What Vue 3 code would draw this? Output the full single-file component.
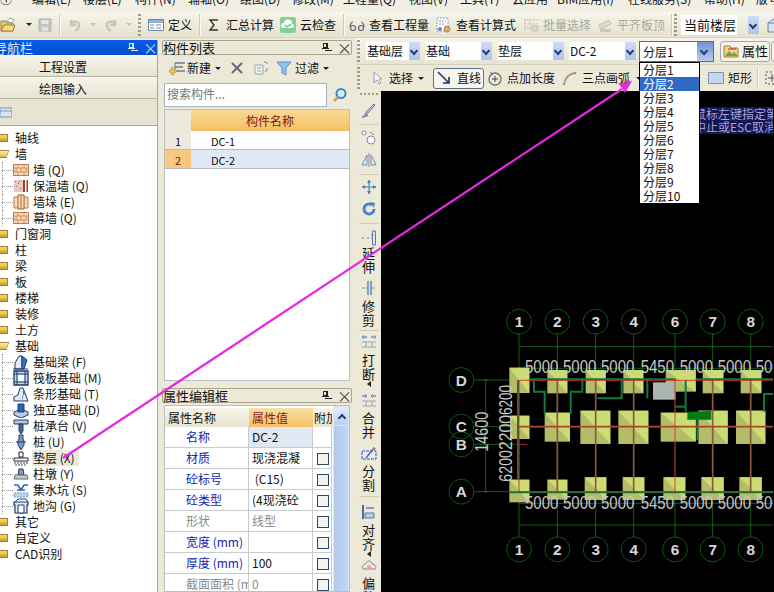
<script setup>
const icons = {
  folder: '<path d="M1 4h5l1 2h6v8H1z" fill="#e8c860" stroke="#a08030"/><path d="M7 4l3-3 4 2-2 3z" fill="#fff" stroke="#8aa"/><path d="M1 14l3-6h11l-2 6z" fill="#f2d98a" stroke="#a08030"/>',
  save: '<path d="M2 2h12v12H2z" fill="#c4c6c0" stroke="#b0b0aa"/><path d="M4.500 3h7v4h-7z" fill="#e6e6e0"/><path d="M5 10h6v4H5z" fill="#e0e0da"/>',
  undo: '<path d="M5 3v5h5M5 8c2-5 8-4 8 0 0 3-2 5-4 6" fill="none" stroke="#c4c6c0" stroke-width="2.500"/>',
  redo: '<path d="M12 3v5H7M12 8C10 3 4 4 4 8c0 3 2 5 4 6" fill="none" stroke="#c4c6c0" stroke-width="2.500"/>',
  table: '<path d="M.5 2.500h15v11H.5z" fill="#fff" stroke="#6a84a8"/><path d="M1 3h14v3H1z" fill="#8fb0da"/><path d="M2 8h4M2 11h4M8 8h5M8 11h5" stroke="#6a84a8"/>',
  sigma: '<path d="M12 3H4l4 5-4 5h8" fill="none" stroke="#333" stroke-width="1.400"/>',
  cloud: '<rect x="0" y="0" width="16" height="16" rx="2" fill="#7fd19a"/><path d="M3 11a2.500 2.500 0 0 1 1-5 4 4 0 0 1 8 1 2 2 0 0 1 0 4z" fill="#fff"/><path d="M5 8l2 2 4-3" fill="none" stroke="#5cb87a" stroke-width="1.300"/>',
  glasses: '<path d="M1 10c0-3 2-5 3-5M15 10c0-3-2-5-3-5" fill="none" stroke="#667" stroke-width="1.200"/><circle cx="4" cy="11" r="2.500" fill="none" stroke="#667" stroke-width="1.200"/><circle cx="12" cy="11" r="2.500" fill="none" stroke="#667" stroke-width="1.200"/>',
  calc: '<path d="M1 1h11v13H1z" fill="#fff" stroke="#8aa0c0" stroke-dasharray="2 1"/><path d="M3 4h7M3 7h5" stroke="#6a8ac0" stroke-dasharray="2 1"/><circle cx="11" cy="12" r="3" fill="#e8a860" stroke="#a86"/><circle cx="4" cy="12" r="2" fill="#6a8ac0"/>',
  batch: '<path d="M1 3h14M1 7h14M1 11h10M2 2v12M7 2v12" stroke="#c4c6be" stroke-dasharray="2 1" fill="none"/><path d="M9 9h6v5H9z" fill="#d8d8d0" stroke="#c0c0b8"/>',
  level: '<path d="M2 8l10-5 2 4-10 5z" fill="#dcdcd4" stroke="#bcbcb4"/><path d="M3 12h11v3H3z" fill="#c8c8c0"/>',
  house: '<path d="M1 6l7-5 7 5v9H1z" fill="#d8e4f2" stroke="#6a84a8"/><path d="M1 6h14" stroke="#6a84a8"/>',
  attr: '<path d="M1 3h6l1 2h7v9H1z" fill="#eed28a" stroke="#a08030"/><path d="M2 13l4-5 3 3 2-2 4 4z" fill="#6aa84f"/><path d="M5 6h8" stroke="#c03030"/>',
  pointer: '<path d="M5 2v11l3-3 2 4 2-1-2-4h3z" fill="#f4f4f8" stroke="#9aa4bc"/>',
  line: '<path d="M2 2l11 11M13 7v6H7" fill="none" stroke="#1a3a6a" stroke-width="1.600"/>',
  ptlen: '<circle cx="8" cy="9" r="6" fill="none" stroke="#777" stroke-width="1.400"/><path d="M8 6v6M5 9h6" stroke="#445"/><path d="M3 2l3 2-3 2" fill="none" stroke="#777"/>',
  arc: '<path d="M2 14C3 8 7 4 13 3" fill="none" stroke="#b89a90" stroke-width="1.800"/><circle cx="2" cy="14" r="1.300" fill="#8a8"/><circle cx="13" cy="3" r="1.300" fill="#a88"/>',
  rect: '<path d="M.5 2.500h15v11H.5z" fill="#c4d6f2" stroke="#7a94bc"/>',
  snap: '<path d="M2 2h12v12H2z" fill="none" stroke="#555" stroke-dasharray="2 2"/><path d="M8 4v8M4 8h8" stroke="#556"/>',
  newb: '<path d="M6 3h10M6 7h8M6 11h10" stroke="#6a7a94" stroke-width="1.300"/><path d="M6 3v8" stroke="#6a7a94"/><path d="M3 9h3v3h3v3H6v3H3v-3H0v-3h3z" transform="scale(.82)" fill="#e8c860" stroke="#a89040" stroke-width=".7"/>',
  del: '<path d="M3 3l10 10M13 3L3 13" stroke="#646a74" stroke-width="2"/>',
  copy: '<path d="M2 5h8v9H2z" fill="#f0f0ea" stroke="#9ab"/><path d="M4 8h4M4 11h4" stroke="#9ab"/><path d="M11 2h3v3M14 8v3h-3" fill="none" stroke="#68a" stroke-dasharray="2 1"/>',
  filter: '<path d="M1 2h14L10 8v7L6 13V8z" fill="#8ac4ec" stroke="#5a94c8"/>',
  search: '<circle cx="9" cy="6.500" r="4.500" fill="#d8ecf8" stroke="#3a8ad0" stroke-width="2"/><path d="M6 10l-4 4" stroke="#d8a040" stroke-width="2.500"/>',
  pen: '<path d="M3 14l3-5 7-7 1 1-6 7z" fill="#c4c6dc" stroke="#778"/><path d="M1 15c3 0 4-1 6-2" stroke="#a060c0" fill="none" stroke-width="1.500"/>',
  nodes: '<circle cx="3" cy="4" r="2" fill="#fff" stroke="#88a"/><circle cx="10" cy="11" r="4" fill="#fff" stroke="#88a"/><path d="M9 3l4 3" stroke="#88a"/>',
  mirror: '<path d="M8 1v14" stroke="#88a"/><path d="M6 3v10H1zM10 3v10h5z" fill="#dfe6f4" stroke="#7a8cb4"/>',
  move: '<path d="M8 1v14M1 8h14" stroke="#6a9ac0" stroke-width="1.500"/><path d="M8 1l-2 3h4zM8 15l-2-3h4zM1 8l3-2v4zM15 8l-3-2v4z" fill="#4a7ab0"/>',
  rotate: '<path d="M13 8a5 5 0 1 1-2-4" fill="none" stroke="#4a84d0" stroke-width="3"/><path d="M9 1l5 1-1 5z" fill="#4a84d0"/>',
  extend: '<path d="M1 8h3M6 8h2M10 5h3M10 8h1" stroke="#678" stroke-dasharray="2 1"/><path d="M11.500 1h3v14h-3z" fill="#e0e8f4" stroke="#5a7ab0"/>',
  trim: '<path d="M7 1v14M10 1v14" stroke="#5a7ab0" stroke-width="1.400"/><path d="M1 8h5M11 8h4" stroke="#5a9a9a" stroke-dasharray="3 1"/>',
  breakk: '<path d="M1 3h5M10 3h5" stroke="#6a9ac0" stroke-width="1.500"/><path d="M3 1L1 3l2 2M13 1l2 2-2 2" fill="none" stroke="#6a9ac0"/><path d="M1 8h14M1 13h14M5 8v5M11 8v5" stroke="#9aa4b4"/>',
  merge: '<path d="M1 3h5M10 3h5" stroke="#6a9ac0" stroke-width="1.500"/><path d="M4 1l2 2-2 2M12 1l-2 2 2 2" fill="none" stroke="#6a9ac0"/><path d="M1 8h14M1 13h14M5 8v5M11 8v5" stroke="#9aa4b4"/>',
  split: '<path d="M1 5h14v8H1z" fill="#e4ecf8" stroke="#3a4ac0" stroke-dasharray="3 1"/><path d="M5 12l8-10" stroke="#668" stroke-width="1.500"/><path d="M12 1l3 1-2 3z" fill="#a88"/>',
  align: '<path d="M2 1v14" stroke="#4a6a9a" stroke-width="2"/><path d="M5 4h8" stroke="#5a7ab0" stroke-width="1.400" fill="none"/><path d="M4 9h9v5H4z" fill="#b8cce8" stroke="#5a7ab0"/>',
  offset: '<path d="M2 12c-2-3 1-5 3-5 0-4 6-4 6 0 3 0 5 3 3 5z" fill="#f4e6e6" stroke="#8a8a8a"/><circle cx="8" cy="10" r="2" fill="#e8a0b0"/>',
  brick: '<path d="M.5 2.500h15v11H.5z" fill="#f8d8b8" stroke="#c07850"/><path d="M1 6h14M1 10h14M5 3v3M11 3v3M8 6v4M3 6v4M13 6v4M5 10v3M11 10v3" stroke="#d09060"/>',
  insul: '<path d="M1 2h9v12H1z" fill="#e8c8c0"/><path d="M2 3h1v1H2zM5 5h1v1H5zM3 8h1v1H3zM7 10h1v1H7zM6 3h1v1H6z" fill="#966"/><path d="M10 2h2v12h-2zM13.500 2h1.500v12h-1.500z" fill="#a04020"/>',
  pier: '<path d="M1 3h14v11H1z" fill="#f8d8b8" stroke="#c07850"/><path d="M5 1h6v14H5z" fill="#ffe8c0" stroke="#a05820"/><path d="M8 1v14" stroke="#a05820"/>',
  fbeam: '<path d="M2 15V9l4-7h3v13z" fill="#dfe8f4" stroke="#1f3a6a"/><path d="M9 2l5 4-3 9H9z" fill="#2a78d0" stroke="#1f3a6a"/><path d="M0 15h15" stroke="#1f3a6a"/>',
  raft: '<path d="M1 1h14v14H1z" fill="#c8d8ec" stroke="#1f3a6a" stroke-width="1.300"/><path d="M4 1v14M12 1v14M1 4h14M1 12h14" stroke="#1f3a6a"/><path d="M5 5h6v6H5z" fill="#fff"/>',
  strip: '<path d="M1 15v-4l4-2 2-7h3l5 13z" fill="#e4ecf6" stroke="#1f3a6a"/><path d="M10 2l2 6-3 2 1 5z" fill="#2a78d0"/>',
  indep: '<path d="M1 10l7-3 7 3v3l-7 3-7-3z" fill="#b8cce8" stroke="#1f3a6a"/><path d="M5 2h6v8H5z" fill="#2a68b0" stroke="#1f3a6a"/>',
  cap: '<path d="M1 2h14v4H1z" fill="#b8c8dc" stroke="#1f3a6a"/><path d="M6 6h4v7l-2 3-2-3z" fill="#446a9a" stroke="#1f3a6a"/>',
  pile: '<path d="M6 1h4v4l1 2v4l-3 5-3-5V7l1-2z" fill="#7a9ac4" stroke="#1f3a6a"/><path d="M3 8h10" stroke="#1f3a6a"/>',
  cushion: '<path d="M6 2h4v5H6zM1 8h14v3H1z" fill="#fff" stroke="#223"/><path d="M1 13h14M2 15h12" stroke="#445" stroke-dasharray="2 1"/>',
  cpier: '<path d="M6 3h4l1 6H5z" fill="#7a9ac4" stroke="#334"/><path d="M2 9h12l1 4H1z" fill="#c8c8c8" stroke="#667"/>',
  sump: '<path d="M1 3h4l3 5 3-5h4M4 8h8" fill="none" stroke="#2a6ab0" stroke-width="1.500"/><path d="M1 11h14v4H1z" fill="#b8d8f0" stroke="#6a9ac0" stroke-dasharray="2 1"/>',
  trench: '<path d="M1 4h14v3h-1v8H2V7H1z" fill="#dfe8f4" stroke="#1f3a6a" stroke-width="1.200"/><path d="M5 7h6v8H5z" fill="#fff" stroke="#1f3a6a"/><path d="M2 4l3-3h8l2 3" fill="none" stroke="#1f3a6a"/>',
  leaf: '<path d="M0 4h12v9H0z" fill="#d8e4f4" stroke="#7a94bc"/><path d="M0 7h12" stroke="#7a94bc"/>'
}

const withW = arr => arr.map((it, i) => ({ ...it, w: (arr[i + 1] ? arr[i + 1].x : it.end) - it.x }))
const row1 = withW([
  { x: 0, ic: 'folder' }, { x: 22, caret: 1 }, { x: 37, ic: 'save' }, { x: 58, sep: 1 },
  { x: 66, ic: 'undo' }, { x: 86, caret: 1, off: 1 }, { x: 103, ic: 'redo' }, { x: 122, caret: 1, off: 1 },
  { x: 136, grip: 1 }, { x: 148, ic: 'table', t: '定义' }, { x: 198, sep: 1 },
  { x: 206, ic: 'sigma', t: '汇总计算' }, { x: 280, ic: 'cloud', t: '云检查' }, { x: 342, sep: 1 },
  { x: 349, ic: 'glasses', t: '查看工程量' }, { x: 436, ic: 'calc', t: '查看计算式' },
  { x: 523, ic: 'batch', t: '批量选择', off: 1 }, { x: 597, ic: 'level', t: '平齐板顶', off: 1 },
  { x: 670, sep: 1, end: 674 }
])
const row3 = withW([
  { x: 369, ic: 'pointer', t: '选择' }, { x: 414, caret: 1 }, { x: 433, ic: 'line', t: '直线', box: 1 },
  { x: 487, ic: 'ptlen', t: '点加长度' }, { x: 562, ic: 'arc', t: '三点画弧' }, { x: 632, caret: 1 },
  { x: 708, ic: 'rect', t: '矩形' }, { x: 756, sep: 1 }, { x: 764, ic: 'snap', end: 782 }
])
const combos = [
  { t: '基础层', w: 43 }, { t: '基础', w: 56 }, { t: '垫层', w: 56 }, { t: 'DC-2', w: 56 }
]
const menus = [
  ['①', 32], ['编辑(E)', 51], ['楼层(L)', 52], ['构件(N)', 53], ['辅轴(O)', 52], ['绘图(D)', 52], ['修改(M)', 51],
  ['工程量(Q)', 66], ['视图(V)', 51], ['工具(T)', 52], ['云应用', 45], ['BIM应用(I)', 71], ['在线服务(S)', 76], ['帮助(H)', 52], ['版号', 40]
]
const tree = [
  { t: '轴线' }, { t: '墙', open: 1 },
  { t: '墙 (Q)', ic: 'brick' }, { t: '保温墙 (Q)', ic: 'insul' }, { t: '墙垛 (E)', ic: 'pier' }, { t: '幕墙 (Q)', ic: 'brick' },
  { t: '门窗洞' }, { t: '柱' }, { t: '梁' }, { t: '板' }, { t: '楼梯' }, { t: '装修' }, { t: '土方' }, { t: '基础', open: 1 },
  { t: '基础梁 (F)', ic: 'fbeam' }, { t: '筏板基础 (M)', ic: 'raft' }, { t: '条形基础 (T)', ic: 'strip' }, { t: '独立基础 (D)', ic: 'indep' },
  { t: '桩承台 (V)', ic: 'cap' }, { t: '桩 (U)', ic: 'pile' }, { t: '垫层 (X)', ic: 'cushion', sel: 1 }, { t: '柱墩 (Y)', ic: 'cpier' },
  { t: '集水坑 (S)', ic: 'sump' }, { t: '地沟 (G)', ic: 'trench' },
  { t: '其它' }, { t: '自定义' }, { t: 'CAD识别' }
]
const props = [
  { n: '名称', v: 'DC-2', c: 'blue', vsel: 1, nochk: 1 },
  { n: '材质', v: '现浇混凝', c: 'blue' },
  { n: '砼标号', v: ' (C15)', c: 'blue' },
  { n: '砼类型', v: '(4现浇砼', c: 'blue' },
  { n: '形状', v: '线型', c: 'grey' },
  { n: '宽度 (mm)', v: '', c: 'blue' },
  { n: '厚度 (mm)', v: '100', c: 'blue' },
  { n: '截面面积 (m', v: '0', c: 'grey' }
]
const layers = Array.from({ length: 10 }, (_, i) => '分层' + (i + 1))
const vtools = [
  { grip: 1 }, { ic: 'pen' }, { sep: 1 }, { ic: 'nodes', mb: 1 }, { ic: 'mirror' }, { sep: 1 }, { ic: 'move' }, { ic: 'rotate' }, { sep: 1 },
  { ic: 'extend', t: '延伸', mt: 2, tm: -3, mb: 3 }, { ic: 'trim', t: '修剪', tm: 0, mb: 0 }, { sep: 1 },
  { ic: 'breakk', t: '打断', mt: -1, tm: 0, arrow: 1, mb: 3 }, { ic: 'merge', t: '合并', tm: -1, mb: 4 }, { ic: 'split', t: '分割', tm: -1, mb: 1 }, { sep: 1 },
  { ic: 'align', t: '对齐', mt: 3, tm: 0, arrow: 1 }, { ic: 'offset', t: '偏移', mt: -3, tm: 0 }
]

// CAD plan, in 3x units of the drawing
const axesX = [[240, '1'], [355, '2'], [470, '3'], [584, '4'], [708, '6'], [821, '7'], [935, '8']]
const axesY = [[240, 'D'], [380, 'C'], [433, 'B'], [575, 'A']]
const pads = [
  [211, 203, 60, 76], [325, 210, 60, 70], [440, 210, 60, 70], [553, 210, 60, 70], [680, 210, 90, 65], [791, 210, 62, 70], [905, 210, 62, 70],
  [213, 347, 58, 70], [317, 338, 76, 87], [424, 332, 90, 100], [538, 332, 90, 100], [665, 338, 105, 87], [778, 332, 88, 100], [891, 332, 88, 100],
  [211, 539, 60, 68], [325, 539, 60, 60], [437, 532, 65, 68], [551, 532, 65, 68], [673, 532, 66, 68], [787, 532, 67, 68], [901, 532, 67, 68]
]
const dims = [[258, '5000'], [372, '5000'], [486, '5000'], [605, '5450'], [722, '5000'], [836, '5000'], [950, '5000']]
const beams = [
  'M275 240H285V275H317V342', 'M430 240V275H395V342', 'M548 240V295H475', 'M625 240V295', 'M640 238H710',
  'M740 240V335', 'M708 320H740', 'M775 360V420', 'M975 335V282H1010', 'M237 240V540', 'M270 238H640', 'M770 238H1010', 'M210 577H1010'
]
</script>

<template>
  <div class="app">
    <div class="menu">
      <span v-for="m in menus" :key="m[0]" class="menu-item" :style="{ width: m[1] + 'px' }">{{ m[0] }}</span>
    </div>

    <div class="bar bar-main">
      <template v-for="(it, i) in row1" :key="i">
        <div class="ti" :class="{ off: it.off }" :style="{ width: it.w + 'px' }">
          <span v-if="it.sep" class="sep"></span>
          <span v-else-if="it.grip" class="grip"></span>
          <span v-else-if="it.caret" class="caret"></span>
          <template v-else>
            <svg class="ic" viewBox="0 0 16 16" v-html="icons[it.ic]"></svg>
            <span v-if="it.t">{{ it.t }}</span>
          </template>
        </div>
      </template>
      <span class="grip grip-floor"></span>
      <div class="combo floor"><span class="combo-text">当前楼层</span><span class="combo-btn"></span></div>
      <svg class="ic house" viewBox="0 0 16 16" v-html="icons.house"></svg>
    </div>

    <div class="body">
      <aside class="nav">
        <div class="nav-head">
          <span class="nav-title">导航栏</span>
          <span class="pin light"></span>
          <span class="close light">×</span>
        </div>
        <div class="nav-btn">工程设置</div>
        <div class="nav-btn">绘图输入</div>
        <div class="nav-tool"><svg class="leaf" viewBox="0 0 12 16" v-html="icons.leaf"></svg></div>
        <div class="tree">
          <div v-for="n in tree" :key="n.t" class="node" :class="{ child: n.ic }">
            <template v-if="n.ic">
              <svg class="ic" viewBox="0 0 16 16" v-html="icons[n.ic]"></svg>
              <span class="label" :class="{ selected: n.sel }">{{ n.t }}</span>
            </template>
            <template v-else>
              <span class="fold" :class="{ open: n.open }"></span>
              <span class="label">{{ n.t }}</span>
            </template>
          </div>
        </div>
      </aside>

      <section class="mid">
        <div class="pane-head">
          <span>构件列表</span><span class="spring"></span><span class="pin"></span><span class="close">×</span>
        </div>
        <div class="list-tools">
          <svg class="ic" viewBox="0 0 16 16" v-html="icons.newb"></svg><span class="ml1">新建</span><span class="caret"></span>
          <svg class="ic gap-l" viewBox="0 0 16 16" v-html="icons.del"></svg>
          <svg class="ic gap-l" viewBox="0 0 16 16" v-html="icons.copy"></svg>
          <svg class="ic gap-s" viewBox="0 0 16 16" v-html="icons.filter"></svg><span class="ml1">过滤</span><span class="caret"></span>
        </div>
        <div class="search">
          <div class="search-box">搜索构件...</div>
          <svg class="ic search-ic" viewBox="0 0 16 16" v-html="icons.search"></svg>
        </div>
        <div class="list">
          <div class="lrow lhead"><span class="lnum"></span><span class="lname">构件名称</span></div>
          <div class="lrow"><span class="lnum">1</span><span class="lcell">DC-1</span></div>
          <div class="lrow lsel"><span class="lnum">2</span><span class="lcell">DC-2</span></div>
        </div>
        <div class="pane-head attr-head">
          <span>属性编辑框</span><span class="spring"></span><span class="pin"></span><span class="close">×</span>
        </div>
        <div class="grid">
          <div class="grid-main">
            <div class="prow phead">
              <span class="pn">属性名称</span><span class="pv">属性值</span><span class="pa">附加</span>
            </div>
            <div v-for="p in props" :key="p.n" class="prow">
              <span class="pn cell" :class="p.c">{{ p.n }}</span>
              <span class="pv cell" :class="[{ vsel: p.vsel }, p.c === 'grey' ? 'grey' : '']">{{ p.v }}</span>
              <span class="pa cell"><i v-if="!p.nochk" class="chk"></i></span>
            </div>
          </div>
          <div class="scroll"><span class="scroll-up"></span><span class="scroll-grip"></span></div>
        </div>
      </section>

      <section class="work">
        <div class="bar bar-2">
          <span class="grip"></span>
          <div v-for="c in combos" :key="c.t" class="sel">
            <span class="sel-text" :style="{ width: c.w + 'px' }">{{ c.t }}</span><span class="combo-btn"></span>
          </div>
          <div class="combo active"><span class="combo-text">分层1</span><span class="combo-btn strong"></span></div>
          <button class="attr-btn"><svg class="ic" viewBox="0 0 16 16" v-html="icons.attr"></svg>属性</button>
          <span class="attr-next"></span>
        </div>
        <div class="bar bar-3">
          <span class="grip"></span>
          <div class="ti3" v-for="(it, i) in row3" :key="i" :style="{ width: it.w + 'px' }">
            <span v-if="it.sep" class="sep"></span>
            <span v-else-if="it.caret" class="caret"></span>
            <span v-else class="ti3-in" :class="{ boxed: it.box }">
              <svg class="ic" viewBox="0 0 16 16" v-html="icons[it.ic]"></svg>
              <span v-if="it.t">{{ it.t }}</span>
            </span>
          </div>
        </div>
        <div class="stage">
          <div class="vbar">
            <template v-for="(v, i) in vtools" :key="i">
              <span v-if="v.grip" class="vgrip"></span>
              <span v-else-if="v.sep" class="vsep"></span>
              <div v-else class="vitem" :style="{ marginTop: (v.mt || 0) + 'px', marginBottom: (v.mb || 0) + 'px' }">
                <svg class="ic" viewBox="0 0 16 16" v-html="icons[v.ic]"></svg>
                <span v-if="v.t" class="vtext" :style="{ marginTop: v.tm + 'px' }">{{ v.t }}</span>
                <span v-if="v.arrow" class="varrow"></span>
              </div>
            </template>
          </div>
          <div class="canvas">
            <svg class="plan" viewBox="-174 -627 1176 1503" width="392" height="501">
              <g stroke="#1c8a1c" stroke-width="2" fill="none">
                <path v-for="a in axesX" :key="'v' + a[1]" :d="`M${a[0]} 100V710`" />
                <path v-for="a in axesY" :key="'h' + a[1]" :d="`M105 ${a[0]}H240`" />
                <path d="M240 140H1010M240 675H1010M240 205H1010M240 610H1010M140 240V575" />
                <path d="M132 240h16M132 380h16M132 433h16M132 575h16" />
              </g>
              <g v-for="(p, i) in pads" :key="'p' + i">
                <rect :x="p[0]" :y="p[1]" :width="p[2]" :height="p[3]" fill="#b4bc68" />
                <path :d="`M${p[0]} ${p[1]}h${p[2]}v${p[3]}z`" fill="#ccdc70" />
              </g>
              <g fill="none" stroke="#0f7a3e" stroke-width="6">
                <path v-for="(b, i) in beams" :key="'b' + i" :d="b" />
              </g>
              <rect x="642" y="247" width="68" height="52" fill="#a9b6b0" />
              <path d="M745 336l72-4v27h-72z" fill="#047a16" />
              <g stroke="#8a5a3c" stroke-width="5" fill="none">
                <path d="M355 240V575M470 240V575M584 240V575M821 240V575M935 240V575M240 380H1010" />
              </g>
              <g stroke="#d82020" stroke-width="2.500" fill="none">
                <path d="M1010 241H240V575H1010M708 240V575M240 433H265" />
              </g>
              <path d="M240 380H1010" stroke="#c83020" stroke-width="1.500" />
              <g v-for="a in axesX" :key="'c' + a[1]">
                <circle :cx="a[0]" cy="65" r="37" class="bubble" />
                <text :x="a[0]" y="82" class="bub-t" text-anchor="middle">{{ a[1] }}</text>
                <circle :cx="a[0]" cy="748" r="37" class="bubble" />
                <text :x="a[0]" y="765" class="bub-t" text-anchor="middle">{{ a[1] }}</text>
              </g>
              <g v-for="a in axesY" :key="'l' + a[1]">
                <circle cx="67" :cy="a[0]" r="37" class="bubble" />
                <text x="67" :y="a[0] + 17" class="bub-t" text-anchor="middle">{{ a[1] }}</text>
              </g>
              <g v-for="d in dims" :key="d[0]">
                <text :x="d[0]" y="219" class="dim" textLength="100" lengthAdjust="spacingAndGlyphs">{{ d[1] }}</text>
                <text :x="d[0]" y="628" class="dim" textLength="100" lengthAdjust="spacingAndGlyphs">{{ d[1] }}</text>
              </g>
              <text transform="translate(148 455) rotate(-90)" class="dim" textLength="120" lengthAdjust="spacingAndGlyphs">14600</text>
              <text transform="translate(218 345) rotate(-90)" class="dim" textLength="90" lengthAdjust="spacingAndGlyphs">6200</text>
              <text transform="translate(218 450) rotate(-90)" class="dim" textLength="105" lengthAdjust="spacingAndGlyphs">2200</text>
              <text transform="translate(218 545) rotate(-90)" class="dim" textLength="95" lengthAdjust="spacingAndGlyphs">6200</text>
            </svg>
            <div class="hint">鼠标左键指定第一个端点<br />中止或ESC取消</div>
          </div>
        </div>
      </section>
    </div>

    <div class="drop">
      <div v-for="(l, i) in layers" :key="l" class="drop-item" :class="{ on: i === 1 }">{{ l }}</div>
    </div>

    <svg class="arrow" viewBox="0 0 774 592" width="774" height="592">
      <path d="M63 458L622 89" stroke="#e22ae2" stroke-width="2.200" fill="none" />
      <path d="M632 81L619 84L625 93z" fill="#e22ae2" />
    </svg>
  </div>
</template>

<style scoped>
.app {
  position: relative;
  width: 774px;
  height: 592px;
  overflow: hidden;
  display: flex;
  flex-direction: column;
  background: #ece9d8;
  color: #111;
  font: 12px/16px "Noto Sans CJK SC", "Liberation Sans", sans-serif;
}
.ic { width: 16px; height: 16px; flex: none; display: block; }
.menu {
  height: 12px;
  flex: none;
  overflow: hidden;
  display: flex;
  background: #f2efe4;
  white-space: nowrap;
}
.menu-item { flex: none; margin-top: -9px; line-height: 16px; }
.bar { display: flex; align-items: center; flex: none; }
.bar-main {
  height: 26px;
  background: linear-gradient(#f6f4ea, #e6e2ce);
  border-bottom: 1px solid #d6d2bc;
  box-sizing: border-box;
  white-space: nowrap;
}
.ti { flex: none; display: flex; align-items: center; gap: 4px; height: 24px; }
.off { color: #a8a89c; }
.sep { display: block; width: 1px; height: 22px; background: #cfcbb6; border-right: 1px solid #faf8f0; margin-left: 1px; }
.grip {
  display: block; width: 3px; height: 22px; flex: none; margin-left: 2px;
  background: repeating-linear-gradient(#9e9a86 0 2px, transparent 2px 4px);
}
.caret {
  display: block; width: 0; height: 0; flex: none; margin-left: 4px;
  border: 3px solid transparent; border-top: 3px solid #222; border-bottom: 0;
}
.off .caret { border-top-color: #c4c6c0; }
.grip-floor { margin-left: 0; }
.floor { margin-left: 4px; width: 78px; height: 20px; }
.combo { display: flex; align-items: center; flex: none; }
.combo-text { flex: 1; background: #fff; height: 100%; line-height: 20px; padding-left: 3px; }
.floor .combo-text { margin-right: 11px; font-size: 13px; }
.combo-btn {
  position: relative; flex: none; width: 11px; height: 18px;
  background: linear-gradient(#cddcf4, #aec4ea);
}
.combo-btn::after {
  content: ""; position: absolute; left: 2px; top: 6px; width: 4px; height: 4px;
  border: solid #24407a; border-width: 0 2px 2px 0; transform: rotate(45deg);
}
.house { margin-left: 8px; }
.body { flex: 1; display: flex; min-height: 0; }

.nav { width: 158px; flex: none; display: flex; flex-direction: column; border-right: 1px solid #a8a898; box-sizing: border-box; margin-top: 2px; }
.nav-head {
  height: 15px; flex: none; display: flex; align-items: center; position: relative;
  background: linear-gradient(#0a5ce8, #0550d0); color: #dfe9ff; font-size: 13px; line-height: 15px;
}
.nav-title { margin-left: -6px; flex: 1; }
.pin { display: block; width: 7px; height: 11px; flex: none; position: relative; }
.pin::before { content: ""; position: absolute; left: 1px; top: 1px; width: 5px; height: 5px; border: 1px solid #222; box-sizing: border-box; border-right-width: 2px; }
.pin::after { content: ""; position: absolute; left: 0; top: 6px; width: 7px; height: 1px; background: #222; box-shadow: 3px 2px 0 -0px #222; }
.pin.light::before { border-color: #dfe9ff; }
.pin.light::after { background: #dfe9ff; box-shadow: 3px 2px 0 #dfe9ff; }
.close { width: 12px; margin: 0 2px 0 8px; font-size: 15px; color: #444; line-height: 13px; text-align: center; flex: none; }
.close.light { color: #c0d4f8; }
.nav-btn {
  height: 22px; flex: none; box-sizing: border-box; line-height: 21px; text-align: center; margin-left: -31px;
  background: linear-gradient(#f6f4ea, #e8e4d0); border-top: 1px solid #fbfaf4; border-bottom: 1px solid #b8b49e;
}
.nav-tool { height: 27px; flex: none; background: #e8e4d2; display: flex; align-items: center; border-bottom: 1px solid #a8a898; box-sizing: border-box; }
.leaf { width: 12px; height: 16px; }
.tree { flex: 1; background: #fff; padding-top: 4px; overflow: hidden; }
.node { position: relative; height: 16px; display: flex; align-items: center; }
.fold {
  width: 9px; height: 8px; flex: none; margin-left: -1px; margin-right: 6px; box-sizing: border-box;
  background: linear-gradient(#f8dc80, #d8a020); border: 1px solid #a88020; border-left: 0; border-radius: 0 1px 1px 0;
}
.fold.open { background: linear-gradient(#fbeeb0, #e0b848); transform: skewX(-18deg); }
.node.child { padding-left: 13px; gap: 3px; }
.node.child::before { content: ""; position: absolute; left: 2px; width: 11px; top: 8px; border-top: 1px dotted #999; }
.node.child::after { content: ""; position: absolute; left: 2px; top: 0; height: 16px; border-left: 1px dotted #999; }
.label { line-height: 16px; padding: 0 1px; white-space: nowrap; }
.selected { background: #ece9d8; padding-right: 4px; }

.mid { width: 195px; flex: none; padding: 2px 0 0 4px; box-sizing: border-box; display: flex; flex-direction: column; }
.pane-head {
  height: 15px; flex: none; width: 190px; box-sizing: border-box; display: flex; align-items: center;
  border: 1px solid #a8a48e; border-radius: 2px; font-size: 13px; line-height: 13px; background: #ece9d8;
}
.spring { flex: 1; }
.list-tools { height: 26px; flex: none; display: flex; align-items: center; padding-left: 7px; }
.ml1 { margin-left: 2px; }
.gap-l { margin-left: 8px; }
.gap-s { margin-left: 7px; margin-right: 1px; }
.search { height: 24px; flex: none; display: flex; align-items: center; margin: 2px 0 0 2px; }
.search-box {
  width: 163px; height: 24px; box-sizing: border-box; background: #fff; border: 1px solid #a4b4c4; color: #777; line-height: 20px; padding-left: 2px;
}
.search-ic { margin-left: 5px; }
.list { height: 272px; flex: none; margin: 2px 0 0 2px; width: 186px; box-sizing: border-box; border: 1px solid #b8c0c4; background: #fff; box-shadow: inset 0 0 0 1px #fff; }
.lrow { display: flex; height: 19px; border-bottom: 1px solid #b4bcc4; box-sizing: border-box; line-height: 21px; }
.lhead { height: 21px; line-height: 21px; border-bottom: 0; }
.lnum { width: 26px; flex: none; background: #ece9dc; text-align: center; font-size: 11px; }
.lname { flex: 1; text-align: center; color: #7a1818; background: linear-gradient(#f8d898, #f6c060); }
.lcell { padding-left: 20px; flex: 1; font-size: 11px; }
.lsel .lnum { background: #f8c880; color: #7a1818; }
.lsel .lcell { background: #dfe8f3; }
.attr-head { margin-top: 7px; }
.grid { flex: 1; min-height: 0; margin: 2px 0 0 2px; width: 186px; display: flex; border: 1px solid #b8c0c4; box-sizing: border-box; background: #fff; overflow: hidden; }
.grid-main { width: 168px; flex: none; }
.prow { display: flex; height: 21px; line-height: 20px; }
.phead { background: linear-gradient(#f6f4ea, #e8e4d0); margin-top: 2px; height: 19px; }
.pn { width: 84px; padding-left: 3px; box-sizing: border-box; flex: none; white-space: nowrap; overflow: hidden; }
.pv { width: 64px; padding-left: 3px; box-sizing: border-box; flex: none; white-space: pre; overflow: hidden; }
.pa { width: 19px; flex: none; padding-left: 1px; box-sizing: border-box; overflow: hidden; white-space: nowrap; }
.phead .pv { color: #8a1c1c; background: linear-gradient(#f8e0a8, #f6c060); }
.cell { border-right: 1px solid #c8ccd0; border-bottom: 1px solid #c8ccd0; }
.pn.cell { padding-left: 21px; }
.blue { color: #1424b0; }
.grey { color: #8a8a8a; }
.vsel { background: #dfe8f3; color: #111; }
.chk { display: block; width: 12px; height: 12px; margin: 5px 0 0 3px; border: 1px solid #2a4a6a; background: #f4f4ee; box-sizing: border-box; }
.scroll { flex: 1; background: #dce6f6; position: relative; }
.scroll-up { display: block; height: 17px; margin: 2px 1px 1px; background: linear-gradient(#e0ecfc, #bcd0f0); position: relative; }
.scroll-up::after { content: ""; position: absolute; left: 5px; top: 7px; width: 4px; height: 4px; border: solid #24407a; border-width: 2px 0 0 2px; transform: rotate(45deg); }
.scroll-grip { display: block; height: 166px; margin: 0 1px; background: linear-gradient(90deg, #b4c8ee, #c4d4f2); }

.work { flex: 1; min-width: 0; display: flex; flex-direction: column; margin-left: 3px; }
.bar-2 { height: 27px; background: linear-gradient(#f6f4ea, #e8e4d2); border-bottom: 1px solid #d6d2bc; box-sizing: border-box; overflow: hidden; }
.bar-2 > .grip { margin: 0 6px 0 1px; }
.bar-3 > .grip { margin: 0 9px 0 1px; }
.sel { display: flex; align-items: center; flex: none; margin-right: 5px; }
.sel-text { flex: none; height: 18px; line-height: 18px; background: #fff; padding-left: 1px; box-sizing: border-box; margin-right: -1px; overflow: hidden; white-space: nowrap; }
.sel .combo-btn { margin-left: 1px; }
.active { width: 75px; height: 21px; border: 1px solid #5a6a8a; box-sizing: border-box; margin-left: -2px; }
.active .combo-text { line-height: 19px; }
.strong { background: linear-gradient(#7090d8, #b8ccf0); width: 16px; height: 19px; }
.strong::after { left: 4px; top: 6px; }
.attr-btn {
  margin-left: 6px; width: 50px; height: 21px; flex: none; padding: 0 0 0 2px; display: flex; align-items: center; gap: 3px;
  font: inherit; font-size: 13px; color: inherit; background: #f6f4ea; border: 1px solid #a0a8b8; border-radius: 3px;
}
.attr-next { width: 10px; height: 21px; flex: none; margin-left: 1px; background: #f6f4ea; border: 1px solid #a0a8b8; border-radius: 3px; box-sizing: border-box; }
.bar-3 { height: 26px; background: #ece9d8; overflow: hidden; }
.ti3 { flex: none; display: flex; align-items: center; white-space: nowrap; height: 24px; }
.ti3-in { display: flex; align-items: center; gap: 4px; height: 20px; }
.boxed { width: 51px; height: 21px; box-sizing: border-box; border: 1px solid #5a7090; border-radius: 3px; background: #f8f6ee; padding-left: 2px; gap: 5px; }
.stage { flex: 1; min-height: 0; display: flex; }
.vbar { width: 25px; flex: none; display: flex; flex-direction: column; align-items: center; overflow: hidden; background: #ece9d8; }
.vgrip { display: block; flex: none; height: 2px; width: 18px; margin: 2px 0 4px; background: repeating-linear-gradient(90deg, #9e9a86 0 2px, transparent 2px 4px); }
.vsep { display: block; flex: none; height: 1px; width: 20px; background: #cfcbb6; margin: 3px 0 1px; }
.vitem { flex: none; display: flex; flex-direction: column; align-items: center; padding-top: 3px; }
.vitem > .ic { margin-bottom: 3px; }
.vtext { display: block; width: 14px; font-size: 13px; line-height: 14px; text-align: center; flex: none; }
.varrow { display: block; width: 0; height: 0; margin: 0; border: 3px solid transparent; border-right: 4px solid #222; border-left: 0; }
.canvas { flex: 1; position: relative; background: #000; overflow: hidden; }
.plan { display: block; }
.bubble { fill: none; stroke: #1c8a1c; stroke-width: 2; stroke-dasharray: 14 1; }
.bub-t { font: 700 46px "Liberation Sans", sans-serif; fill: #d8d8d8; }
.dim { font: 54px "Liberation Sans", sans-serif; fill: #c8c8c8; }
.hint {
  position: absolute; left: 313px; top: 16px; width: 79px; height: 27px; overflow: hidden; white-space: nowrap;
  background: #161656; color: #a4a4d8; line-height: 13px; font-size: 12px;
}
.drop {
  position: absolute; left: 639px; top: 62px; width: 61px; height: 142px; box-sizing: border-box;
  background: #fff; border: 1px solid #000;
}
.drop-item { height: 14px; line-height: 14px; padding-left: 3px; }
.drop-item.on { background: #316ac5; color: #fff; }
.arrow { position: absolute; left: 0; top: 0; pointer-events: none; }
</style>
